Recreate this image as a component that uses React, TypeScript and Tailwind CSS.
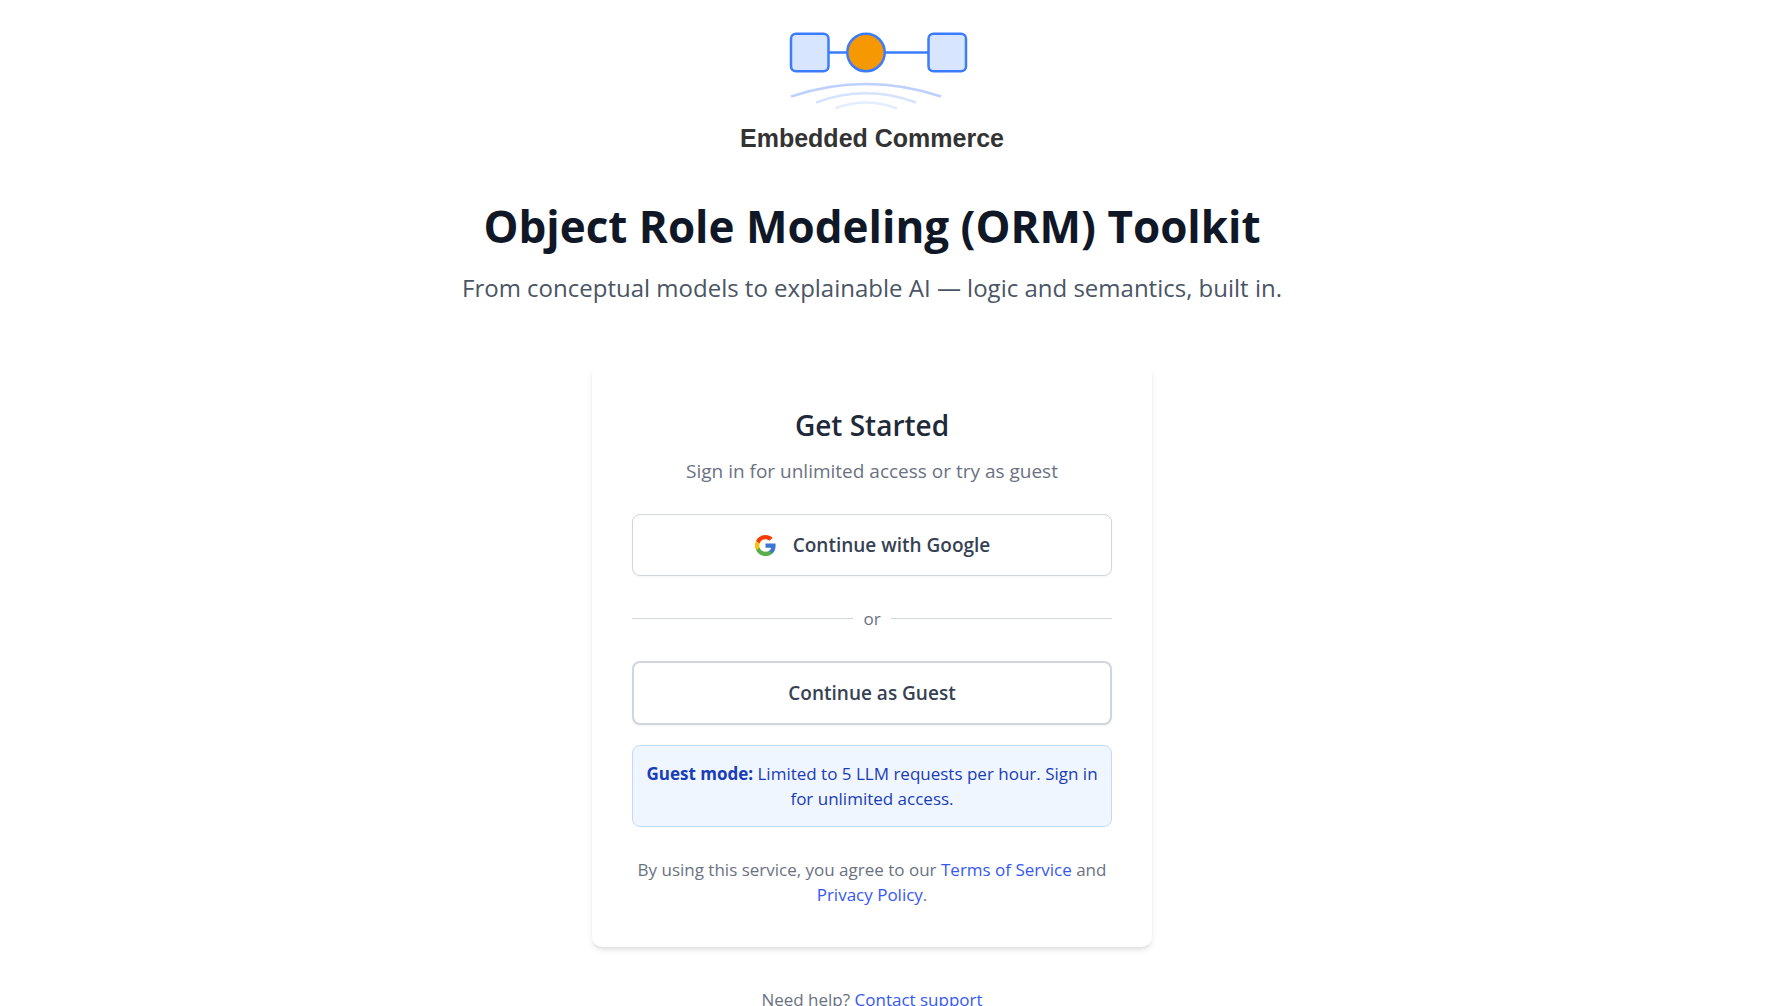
import React from 'react';

function Logo() {
  return (
    <div className="flex flex-col items-center">
      <svg
        viewBox="784 28 176 84"
        className="h-[84px] w-[176px] overflow-visible"
        fill="none"
        role="img"
        aria-label="Embedded Commerce logo"
      >
        <g stroke="#3b7cff" strokeWidth="2.5">
          <path d="M829 52.5H847M885 52.5H928" />
          <rect x="791" y="33.75" width="37.5" height="37.5" rx="5" fill="#d8e5ff" />
          <circle cx="866" cy="52.5" r="18.75" fill="#f59802" />
          <rect x="928.5" y="33.75" width="37.5" height="37.5" rx="5" fill="#d8e5ff" />
        </g>
        <g strokeWidth="2.5">
          <path d="M791 96.5Q866 71.5 941 96.5" stroke="#bcd1ff" />
          <path d="M816 102.5Q866 84 916 102.5" stroke="#d6e3ff" />
          <path d="M835 108.5Q866 96.5 897 108.5" stroke="#e4ecff" />
        </g>
      </svg>
      <p className="mt-3 font-['Liberation_Sans',Arial,sans-serif] text-[25px] leading-7 font-bold text-[#333333]">
        Embedded Commerce
      </p>
    </div>
  );
}

function GoogleMark() {
  return (
    <svg viewBox="0 0 24 24" className="size-[23px]" aria-hidden="true">
      <path
        fill="#3e76d5"
        d="M22.56 12.25c0-.78-.07-1.53-.2-2.25H12v4.26h5.92c-.26 1.37-1.04 2.53-2.21 3.31v2.77h3.57c2.08-1.92 3.28-4.74 3.28-8.09z"
      />
      <path
        fill="#59ad4a"
        d="M12 23c2.97 0 5.46-.98 7.28-2.66l-3.57-2.77c-.98.66-2.23 1.06-3.71 1.06-2.86 0-5.29-1.93-6.16-4.53H2.18v2.84C3.99 20.53 7.7 23 12 23z"
      />
      <path
        fill="#fbc00a"
        d="M5.84 14.09c-.22-.66-.35-1.36-.35-2.09s.13-1.43.35-2.09V7.07H2.18C1.43 8.55 1 10.22 1 12s.43 3.45 1.18 4.93l3.66-2.84z"
      />
      <path
        fill="#f73c00"
        d="M12 5.38c1.62 0 3.06.56 4.21 1.64l3.15-3.15C17.45 2.09 14.97 1 12 1 7.7 1 3.99 3.47 2.18 7.07l3.66 2.84c.87-2.6 3.3-4.53 6.16-4.53z"
      />
    </svg>
  );
}

export default function App() {
  return (
    <div className="min-h-screen bg-white pt-7 pr-[46px] pb-10 font-['Open_Sans',sans-serif] text-[17px] leading-[25px] text-gray-500">
      <header className="flex flex-col items-center text-center">
        <Logo />
        <h1 className="mt-[46px] text-[44px] leading-[56px] font-bold text-gray-900">
          Object Role Modeling (ORM) Toolkit
        </h1>
        <p className="mt-4 text-2xl leading-9 text-gray-600">
          From conceptual models to explainable AI — logic and semantics, built in.
        </p>
      </header>

      <main className="mx-auto mt-[57px] max-w-[560px] rounded-[10px] bg-white p-10 text-center shadow-md">
        <h2 className="mt-1 text-[28px] leading-9 font-semibold text-gray-800">Get Started</h2>
        <p className="mt-3 text-[19px] leading-8">Sign in for unlimited access or try as guest</p>

        <button
          type="button"
          className="mt-[27px] flex h-[62px] w-full items-center justify-center gap-4 rounded-lg border border-gray-300 bg-white text-[19px] font-semibold text-gray-700 shadow-xs"
        >
          <GoogleMark />
          Continue with Google
        </button>

        <div className="my-[30px] flex items-center gap-2.5">
          <span className="h-px flex-1 bg-gray-300" />
          <span>or</span>
          <span className="h-px flex-1 bg-gray-300" />
        </div>

        <button
          type="button"
          className="flex h-16 w-full items-center justify-center rounded-lg border-2 border-gray-300 bg-white text-[19px] font-semibold text-gray-700 shadow-xs"
        >
          Continue as Guest
        </button>

        <p className="mt-5 rounded-lg border border-blue-200 bg-blue-50 px-2 py-[15px] text-blue-800">
          <strong className="font-bold">Guest mode:</strong> Limited to 5 LLM requests per hour. Sign in for
          unlimited access.
        </p>

        <p className="mt-[30px]">
          By using this service, you agree to our{' '}
          <a href="#terms" className="text-[#3558f5]">
            Terms of Service
          </a>{' '}
          and{' '}
          <a href="#privacy" className="text-[#3558f5]">
            Privacy Policy
          </a>
          .
        </p>
      </main>

      <footer className="mt-10 text-center">
        Need help?{' '}
        <a href="#support" className="text-[#3558f5]">
          Contact support
        </a>
      </footer>
    </div>
  );
}
